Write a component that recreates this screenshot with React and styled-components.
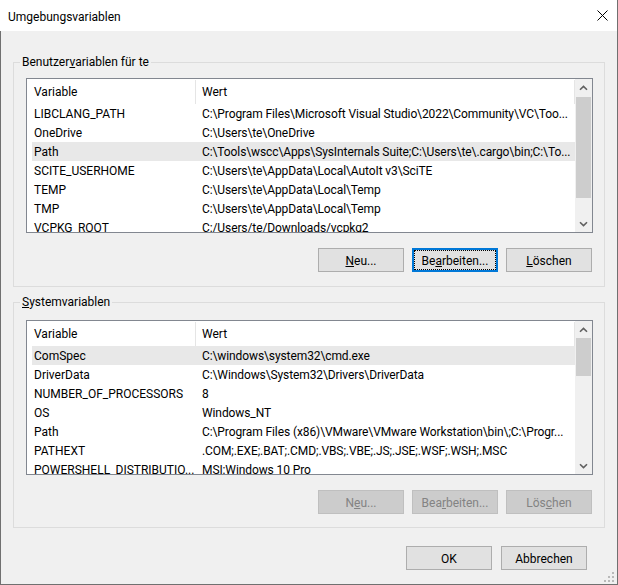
import React from 'react';
import styled, { createGlobalStyle, css } from 'styled-components';

// --- GLOBAL STYLES ---
const GlobalStyle = createGlobalStyle`
  html, body {
    margin: 0;
    padding: 0;
    background: #f0f0f0;
  }
  body {
    font-family: Roboto, "Segoe UI", "Liberation Sans", sans-serif;
    font-size: 12px;
    color: #000;
  }
`;

// --- Window frame ---
const Window = styled.div`
  position: relative;
  width: 618px;
  height: 585px;
  box-sizing: border-box;
  display: flex;
  flex-direction: column;
  background: #f0f0f0;
  border-right: 1px solid #707070;
  border-bottom: 1px solid #707070;
`;

const TitleBar = styled.div`
  flex: none;
  height: 31px;
  display: flex;
  align-items: center;
  justify-content: space-between;
  padding-left: 8px;
  background: #fff;
`;

const Title = styled.span`
  padding-top: 2px;
  font-size: 12px;
  line-height: 16px;
`;

const CloseButton = styled.div`
  width: 30px;
  height: 31px;
  display: flex;
  align-items: center;
  justify-content: center;
`;

const Body = styled.div`
  flex: 1;
  display: flex;
  flex-direction: column;
  padding: 24px 12px 0 12px;
  border-left: 1px solid #707070;
`;

// --- Group boxes ---
const Group = styled.fieldset`
  margin: 0;
  padding: 0;
  min-width: 0;
  border: 1px solid #dcdcdc;

  & + & {
    margin-top: 8px;
  }
`;

const Legend = styled.legend`
  margin-left: 6px;
  padding: 0 2px;
  font-size: 12px;
  line-height: 14px;
`;

const GroupInner = styled.div`
  display: flex;
  flex-direction: column;
  padding: ${p => p.$top}px 11px ${p => p.$bottom}px 12px;
`;

const Key = styled.u`
  text-decoration: underline;
  text-underline-offset: 1px;
`;

// --- List view ---
const ListView = styled.div`
  height: 155px;
  box-sizing: border-box;
  display: flex;
  border: 1px solid #828790;
  background: #fff;
`;

const ListBody = styled.div`
  flex: 1;
  min-width: 0;
  overflow: hidden;
`;

const HeaderRow = styled.div`
  display: flex;
  height: 25px;
`;

const HeaderCell = styled.div`
  box-sizing: border-box;
  height: 24px;
  margin-top: 1px;
  padding-top: 2px;
  line-height: 21px;
  border-right: 1px solid #e5e5e5;
  ${p => p.$first
    ? css`width: 169px; flex: none; padding-left: 7px;`
    : css`flex: 1; padding-left: 6px;`}
`;

const Row = styled.div`
  display: flex;
  height: 19px;
  margin-left: 5px;
  background: ${p => (p.$selected ? '#e8e8e8' : 'transparent')};
`;

const Cell = styled.div`
  box-sizing: border-box;
  height: 19px;
  padding-top: 2px;
  line-height: 17px;
  white-space: nowrap;
  overflow: hidden;
  text-overflow: ellipsis;
  ${p => p.$first
    ? css`width: 164px; flex: none; padding-left: 2px;`
    : css`flex: 1; min-width: 0; padding-left: 6px; letter-spacing: -0.1px;`}
`;

// --- Scrollbar ---
const ScrollBar = styled.div`
  flex: none;
  width: 17px;
  display: flex;
  flex-direction: column;
  background: #f0f0f0;
`;

const ScrollArrow = styled.div`
  flex: none;
  height: 17px;
  display: flex;
  align-items: center;
  justify-content: center;
`;

const Track = styled.div`
  flex: 1;
`;

const Thumb = styled.div`
  margin: ${p => p.$offset}px 1px 0 1px;
  height: ${p => p.$size}px;
  background: #cdcdcd;
`;

// --- Buttons ---
const ButtonRow = styled.div`
  display: flex;
  justify-content: flex-end;
  gap: ${p => p.$gap}px;
  margin-top: ${p => p.$top}px;
  padding-right: ${p => p.$right}px;
`;

const Button = styled.button`
  width: 86px;
  height: 24px;
  box-sizing: border-box;
  padding: 1px 0 0;
  font-family: inherit;
  font-size: 12px;
  color: #000;
  background: #e1e1e1;
  border: 1px solid #adadad;
  border-radius: 0;

  ${p => p.$focused && css`
    border: 2px solid #0078d7;
    outline: 1px dotted #000;
    outline-offset: -3px;
  `}

  &:disabled {
    color: #838383;
    background: #cccccc;
    border-color: #bfbfbf;
  }
`;

const Grip = styled.svg`
  position: absolute;
  right: 2px;
  bottom: 1px;
`;

const Chevron = ({ down }) => (
  <svg width="9" height="6" viewBox="0 0 9 6">
    <path
      d={down ? 'M1 1.2 L4.5 4.6 L8 1.2' : 'M1 4.8 L4.5 1.4 L8 4.8'}
      fill="none"
      stroke="#606060"
      strokeWidth="1.6"
    />
  </svg>
);

const userVars = [
  ['LIBCLANG_PATH', 'C:\\Program Files\\Microsoft Visual Studio\\2022\\Community\\VC\\Too...'],
  ['OneDrive', 'C:\\Users\\te\\OneDrive'],
  ['Path', 'C:\\Tools\\wscc\\Apps\\SysInternals Suite;C:\\Users\\te\\.cargo\\bin;C:\\To...', true],
  ['SCITE_USERHOME', 'C:\\Users\\te\\AppData\\Local\\AutoIt v3\\SciTE'],
  ['TEMP', 'C:\\Users\\te\\AppData\\Local\\Temp'],
  ['TMP', 'C:\\Users\\te\\AppData\\Local\\Temp'],
  ['VCPKG_ROOT', 'C:/Users/te/Downloads/vcpkg2'],
];

const systemVars = [
  ['ComSpec', 'C:\\windows\\system32\\cmd.exe', true],
  ['DriverData', 'C:\\Windows\\System32\\Drivers\\DriverData'],
  ['NUMBER_OF_PROCESSORS', '8'],
  ['OS', 'Windows_NT'],
  ['Path', 'C:\\Program Files (x86)\\VMware\\VMware Workstation\\bin\\;C:\\Progr...'],
  ['PATHEXT', '.COM;.EXE;.BAT;.CMD;.VBS;.VBE;.JS;.JSE;.WSF;.WSH;.MSC'],
  ['POWERSHELL_DISTRIBUTIO...', 'MSI:Windows 10 Pro'],
];

const VariableList = ({ rows, thumbOffset, thumbSize }) => (
  <ListView>
    <ListBody>
      <HeaderRow>
        <HeaderCell $first>Variable</HeaderCell>
        <HeaderCell>Wert</HeaderCell>
      </HeaderRow>
      {rows.map(([name, value, selected]) => (
        <Row key={name + value} $selected={selected}>
          <Cell $first>{name}</Cell>
          <Cell>{value}</Cell>
        </Row>
      ))}
    </ListBody>
    <ScrollBar>
      <ScrollArrow><Chevron /></ScrollArrow>
      <Track>
        <Thumb $offset={thumbOffset} $size={thumbSize} />
      </Track>
      <ScrollArrow><Chevron down /></ScrollArrow>
    </ScrollBar>
  </ListView>
);

const App = () => (
  <Window>
    <GlobalStyle />
    <TitleBar>
      <Title>Umgebungsvariablen</Title>
      <CloseButton>
        <svg width="11" height="11" viewBox="0 0 11 11">
          <path d="M0.5 0.5 L10.5 10.5 M10.5 0.5 L0.5 10.5" stroke="#000" strokeWidth="1" />
        </svg>
      </CloseButton>
    </TitleBar>

    <Body>
      <Group>
        <Legend>Benutzer<Key>v</Key>ariablen für te</Legend>
        <GroupInner $top={9} $bottom={14}>
          <VariableList rows={userVars} thumbOffset={1} thumbSize={101} />
          <ButtonRow $gap={8} $top={15} $right={1}>
            <Button><Key>N</Key>eu...</Button>
            <Button $focused>Be<Key>a</Key>rbeiten...</Button>
            <Button><Key>L</Key>öschen</Button>
          </ButtonRow>
        </GroupInner>
      </Group>

      <Group>
        <Legend><Key>S</Key>ystemvariablen</Legend>
        <GroupInner $top={11} $bottom={13}>
          <VariableList rows={systemVars} thumbOffset={0} thumbSize={38} />
          <ButtonRow $gap={8} $top={15} $right={1}>
            <Button disabled>N<Key>e</Key>u...</Button>
            <Button disabled>Bea<Key>r</Key>beiten...</Button>
            <Button disabled>Lös<Key>c</Key>hen</Button>
          </ButtonRow>
        </GroupInner>
      </Group>

      <ButtonRow $gap={9} $top={18} $right={18}>
        <Button>OK</Button>
        <Button>Abbrechen</Button>
      </ButtonRow>
    </Body>

    <Grip width="12" height="12" viewBox="0 0 12 12">
      {[[10, 2], [6, 6], [10, 6], [2, 10], [6, 10], [10, 10]].map(([x, y]) => (
        <rect key={`${x}-${y}`} x={x - 1} y={y - 1} width="2" height="2" fill="#b9b9b9" />
      ))}
    </Grip>
  </Window>
);

export default App;
